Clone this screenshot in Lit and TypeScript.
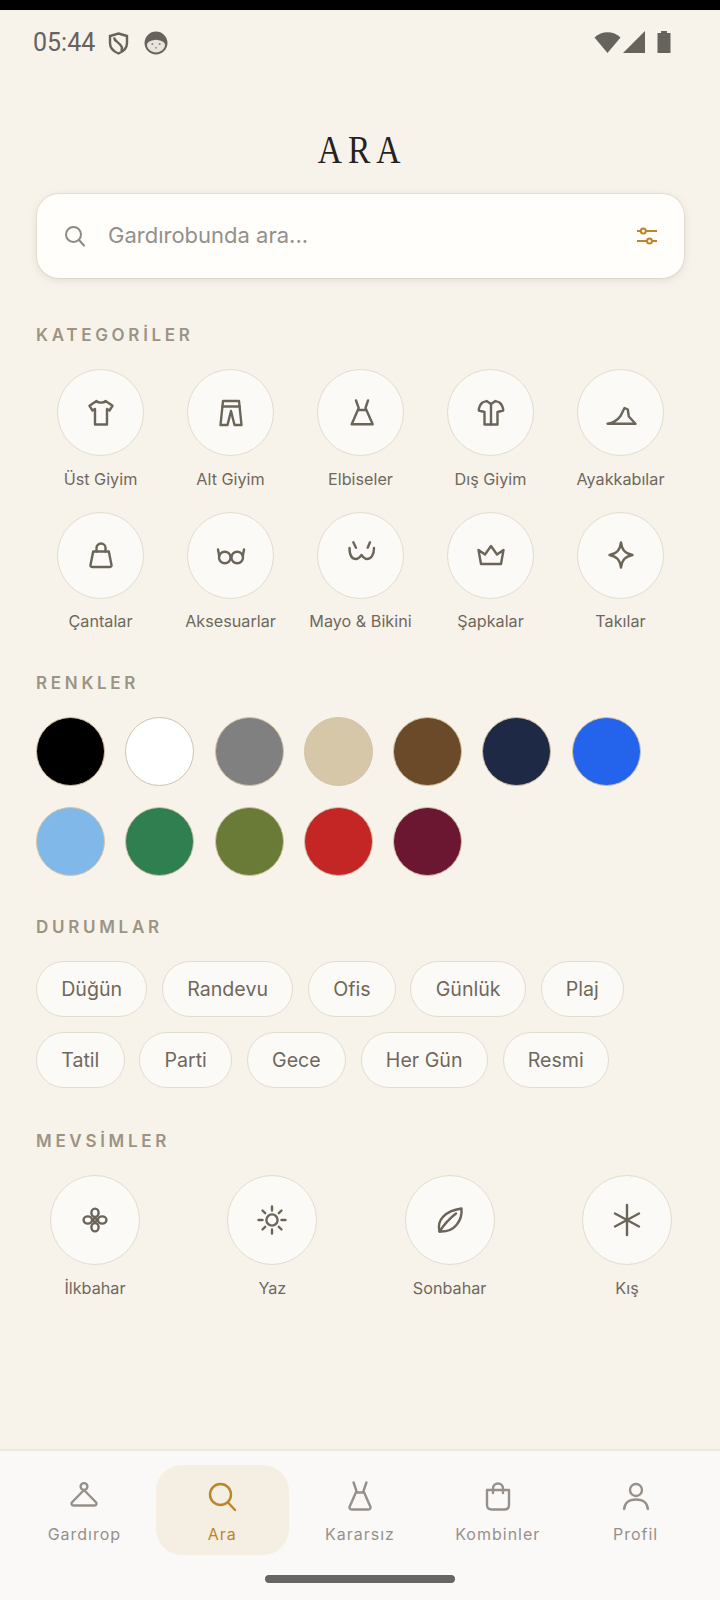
import { LitElement, html, css, svg } from "lit";
import { customElement } from "lit/decorators.js";

const I: Record<string, any> = {
  shirt: svg`<path d="M9.5 2C11 4.2 17 4.2 18.5 2L25.5 6.8L22.5 11.5L20 10V25.5H8V10L5.5 11.5L2.5 6.8Z"/>`,
  pants: svg`<path d="M6 2H22L24.5 26H17.5L14 12L10.5 26H3.5Z"/><path d="M5.5 7.5H22.5"/>`,
  dress: svg`<path d="M9 1.5L11.7 9L4.7 25.3H25.7L18.5 9L21 1.5"/><path d="M11.5 11H19"/>`,
  jacket: svg`<path d="M9.5 2L5.5 3.5Q2 6.5 1.8 11.5L7.5 13V25.5H20.5V13L26.2 11.5Q26 6.5 22.5 3.5L18.5 2L14 5Z"/><path d="M14 5V25.5"/>`,
  heel: svg`<path d="M0.5 24.7H28.5L21.8 17.5L20.8 10.5L17.5 9L13.5 17C11 20.5 6 24 0.5 24.7Z"/>`,
  bag: svg`<path d="M6.2 10.5H21.8L24.5 24Q24.7 26 22.5 26H5.5Q3.3 26 3.5 24Z"/><path d="M9.5 10.5V7A4.5 4.5 0 0 1 18.5 7V10.5"/>`,
  glasses: svg`<circle cx="7.8" cy="16.5" r="5.8"/><circle cx="20.2" cy="16.5" r="5.8"/><path d="M13.5 15.5Q14 14.8 14.5 15.5M1 8.5L2.2 15M27 8.5L25.8 15"/>`,
  bikini: svg`<path d="M2.5 7C2.5 14 5 18 9 18C11.5 18 13 16 14.5 14C16 16 17.5 18 20 18C24 18 27 14 27 7"/><path d="M6.3 1.3L9 6.7M23 1.3L20.7 6.7"/>`,
  crown: svg`<path d="M1.5 9L8 13.5L14 5L20 13.5L26.5 9L24 23H4Z"/>`,
  spark: svg`<path d="M14 1.5C15 9 18 12.5 25.5 14C18 15.5 15 19 14 26.5C13 19 10 15.5 2.5 14C10 12.5 13 9 14 1.5Z"/>`,
  flower: svg`<ellipse cx="14" cy="6.8" rx="3.6" ry="4.2"/><ellipse cx="14" cy="21.2" rx="3.6" ry="4.2"/><ellipse cx="6.8" cy="14" rx="4.2" ry="3.6"/><ellipse cx="21.2" cy="14" rx="4.2" ry="3.6"/><circle cx="14" cy="14" r="1.8"/>`,
  sun: svg`<circle cx="14" cy="14" r="5.6"/><path d="M14 0.5V4.5M14 23.5V27.5M0.5 14H4.5M23.5 14H27.5M4.5 4.5L7.2 7.2M20.8 20.8L23.5 23.5M23.5 4.5L20.8 7.2M7.2 20.8L4.5 23.5"/>`,
  leaf: svg`<path d="M3.5 25.5C0.5 14 9 5 25.5 2.5C26.5 14 19 26.5 3.5 25.5Z"/><path d="M3.5 25.5C8.5 18 14 12 20 7.5"/>`,
  snow: svg`<path d="M14 -1V29M2 7.5L26 20.5M26 7.5L2 20.5"/>`,
};

const N: Record<string, any> = {
  hanger: svg`<circle cx="14" cy="4.5" r="3.4"/><path d="M14 8L1.8 20.5Q0.8 23.5 3.5 23.5H24.5Q27.2 23.5 26.2 20.5Z"/>`,
  search: svg`<circle cx="12.5" cy="12.5" r="10.5"/><path d="M20 20.5L27 28"/>`,
  dress: svg`<path d="M7.6 0.5L10.5 9L3.5 25Q3.3 27.5 5.5 27.5H22.5Q24.7 27.5 24.5 25L17.5 9L20.4 0.5"/><path d="M10.5 10.5H17.5"/>`,
  bag: svg`<path d="M3 8H25V23Q25 27.5 20.5 27.5H7.5Q3 27.5 3 23Z"/><path d="M9 11V6.5A5 5 0 0 1 19 6.5V11"/>`,
  person: svg`<circle cx="14" cy="8" r="6"/><path d="M2.2 27C2.5 21 7 17.5 14 17.5S25.5 21 25.8 27"/>`,
};

const cats1 = [["shirt","Üst Giyim"],["pants","Alt Giyim"],["dress","Elbiseler"],["jacket","Dış Giyim"],["heel","Ayakkabılar"],
  ["bag","Çantalar"],["glasses","Aksesuarlar"],["bikini","Mayo & Bikini"],["crown","Şapkalar"],["spark","Takılar"]];
const colors = ["#000000","#ffffff","#808080","#d6c7a9","#6b4a29","#1d2945","#2463eb","#80b8ea","#2f7f50","#6a7b37","#c42626","#6b1732"];
const chips1 = ["Düğün","Randevu","Ofis","Günlük","Plaj","Tatil","Parti","Gece","Her Gün","Resmi"];
const seasons = [["flower","İlkbahar"],["sun","Yaz"],["leaf","Sonbahar"],["snow","Kış"]];
const nav = [["hanger","Gardırop"],["search","Ara"],["dress","Kararsız"],["bag","Kombinler"],["person","Profil"]];

@customElement("app-root")
export class AppRoot extends LitElement {
  static styles = css`
    :host { display: flex; flex-direction: column; height: 1600px; background: #f7f3eb; font-family: Inter, "Noto Sans", sans-serif; overflow: hidden; }
    .notch { height: 10px; background: #000; flex: none; }
    .status { height: 66px; flex: none; display: flex; align-items: center; padding: 0 49px 0 33px; color: #66625c; box-sizing: border-box; }
    .time { font: 400 25px/30px Roboto, sans-serif; width: 75px; }
    .status svg { display: block; flex: none; }
    .shield { margin-right: 15px; }
    .spacer { flex: 1; }
    .sys { display: flex; align-items: center; gap: 2px; margin-top: -3px; }
    .title { margin: 49px 0 0; height: 50px; text-align: center; font: 400 39px/50px "Liberation Serif", serif; color: #26221d; letter-spacing: 7px; padding-left: 5px; transform: scaleX(.86); }
    main { flex: 1; padding: 0 36px; }
    .search { margin: 19px 0 0 1px; height: 84px; border-radius: 22px; background: #fffefb; box-shadow: 0 2px 8px rgba(120,100,70,.16), 0 0 0 1px rgba(225,215,195,.45); display: flex; align-items: center; padding: 0 27px 0 27px; box-sizing: border-box; }
    .search .ph { flex: 1; margin: -2px 0 0 22px; font-size: 22px; color: #94908a; }
    .search svg { display: block; flex: none; }
    h2 { margin: 39px 0 23px; font-size: 17px; line-height: 22px; font-weight: 600; letter-spacing: 3.7px; color: #9b9485; }
    h2.first { margin-top: 46px; }
    h2.third { margin-top: 40px; }
    h2.fourth { margin-top: 42px; }
    .grid { display: grid; grid-template-columns: repeat(5, 130px); row-gap: 21px; margin-left: -0.5px; }
    .cell { display: flex; flex-direction: column; align-items: center; }
    .circle { width: 87px; height: 87px; border-radius: 50%; background: #fcfaf6; border: 1.5px solid #e3dccd; box-sizing: border-box; display: flex; align-items: center; justify-content: center; }
    .grid .cell span { margin-top: 10.5px; }
    .circle svg, .nav svg { display: block; fill: none; stroke-width: 2.4; stroke-linejoin: round; stroke-linecap: round; overflow: visible; }
    .circle svg { stroke: #6b6459; }
    .cell span { margin-top: 11px; font-size: 16.2px; line-height: 24px; color: #6f685d; white-space: nowrap; }
    .swatches { display: flex; flex-wrap: wrap; gap: 21px 20.3px; }
    .swatch { width: 69px; height: 69px; border-radius: 50%; box-sizing: border-box; border: 1.5px solid #d3c3a6; }
    .chips { display: flex; flex-wrap: wrap; gap: 15px 14.8px; }
    .chip { height: 56px; padding: 0 24.2px; border-radius: 28px; background: #fcfaf6; border: 1.5px solid #e3dccd; box-sizing: border-box; display: flex; align-items: center; font-size: 19.6px; color: #6f685d; }
    .seasons { display: flex; justify-content: space-between; padding: 0 12px 0 14px; }
    .seasons .circle { width: 90px; height: 90px; }
    .nav { flex: none; height: 151px; box-sizing: border-box; background: #fbf9f7; border-top: 2px solid #efe8df; padding: 14px 18px 0; display: flex; gap: 5px; align-items: flex-start; position: relative; }
    .tab { flex: 1; height: 90px; border-radius: 26px; display: flex; flex-direction: column; align-items: center; color: #97908a; font-size: 16px; letter-spacing: 1px; box-sizing: border-box; padding-top: 17px; }
    .tab svg { stroke: #97908a; }
    .tab span { margin-top: 13px; line-height: 22px; font-weight: 400; }
    .tab.on { background: #f5eee3; color: #bd8526; }
    .tab.on svg { stroke: #bd8526; }
    .home { position: absolute; left: 265px; top: 124px; width: 190px; height: 8px; border-radius: 4px; background: #666; }
  `;

  render() {
    return html`
      <div class="notch"></div>
      <div class="status">
        <span class="time">05:44</span>
        <svg class="shield" width="21" height="23" viewBox="0 0 21 23" fill="none" stroke="#66625c" stroke-width="2.4"><path d="M10.5 1.5L19 4V11C19 16 15.5 19.5 10.5 21.5C5.5 19.5 2 16 2 11V4Z"/><path d="M6 5.5C6.5 10 12 10 14 15.5L13.5 19"/></svg>
        <svg width="24" height="24" viewBox="0 0 23 23"><circle cx="11.5" cy="11.5" r="11" fill="#66625c"/><path d="M2.8 13C4 9.5 8 9 11.5 8.5C15 9 19 9.5 20.2 13C20 17.5 16 20.5 11.5 20.5S3 17.5 2.8 13Z" fill="#e8e4dc"/><circle cx="8" cy="12.5" r="1" fill="#8d8980"/><circle cx="15" cy="12.5" r="1" fill="#8d8980"/><circle cx="11.5" cy="16" r="1" fill="#a5a198"/></svg>
        <div class="spacer"></div>
        <div class="sys">
          <svg width="27" height="22" viewBox="0 0 27 22" fill="#66625c"><path d="M0.5 6.5C7.5 -0.5 19.5 -0.5 26.5 6.5L13.5 22Z"/></svg>
          <svg width="22" height="22" viewBox="0 0 22 22" fill="#66625c"><path d="M22 0V22H0Z"/></svg>
          <svg style="margin-left:10px" width="14" height="22" viewBox="0 0 14 22" fill="#66625c"><path d="M4 0H10V2H13.5V22H0.5V2H4Z"/></svg>
        </div>
      </div>
      <div class="title">ARA</div>
      <main>
        <div class="search">
          <svg width="22" height="22" viewBox="0 0 22 22" fill="none" stroke="#8f8a80" stroke-width="2" stroke-linecap="round"><circle cx="9.5" cy="9.5" r="7.5"/><path d="M15 15L20 20.5"/></svg>
          <span class="ph">Gardırobunda ara...</span>
          <svg width="20" height="18" viewBox="0 0 20 18" fill="none" stroke="#bd8526" stroke-width="2" stroke-linecap="round"><path d="M0.5 4H3.5M9 4H19.5M0.5 14H9.5M15.5 14H19.5"/><circle cx="6.3" cy="4" r="2.5"/><circle cx="12.5" cy="14" r="2.5"/></svg>
        </div>
        <h2 class="first">KATEGORİLER</h2>
        <div class="grid">
          ${cats1.map(([ic, t]) => html`<div class="cell"><div class="circle"><svg width="28" height="28" viewBox="0 0 28 28">${I[ic]}</svg></div><span>${t}</span></div>`)}
        </div>
        <h2>RENKLER</h2>
        <div class="swatches">
          ${colors.map(c => html`<div class="swatch" style="background:${c}"></div>`)}
        </div>
        <h2 class="third">DURUMLAR</h2>
        <div class="chips">${chips1.map(c => html`<div class="chip">${c}</div>`)}</div>
        <h2 class="fourth">MEVSİMLER</h2>
        <div class="seasons">
          ${seasons.map(([ic, t]) => html`<div class="cell"><div class="circle"><svg width="28" height="28" viewBox="0 0 28 28">${I[ic]}</svg></div><span>${t}</span></div>`)}
        </div>
      </main>
      <div class="nav">
        ${nav.map(([ic, t], i) => html`<div class="tab ${i === 1 ? "on" : ""}"><svg width="28" height="28" viewBox="0 0 28 28">${N[ic]}</svg><span>${t}</span></div>`)}
        <div class="home"></div>
      </div>
    `;
  }
}
